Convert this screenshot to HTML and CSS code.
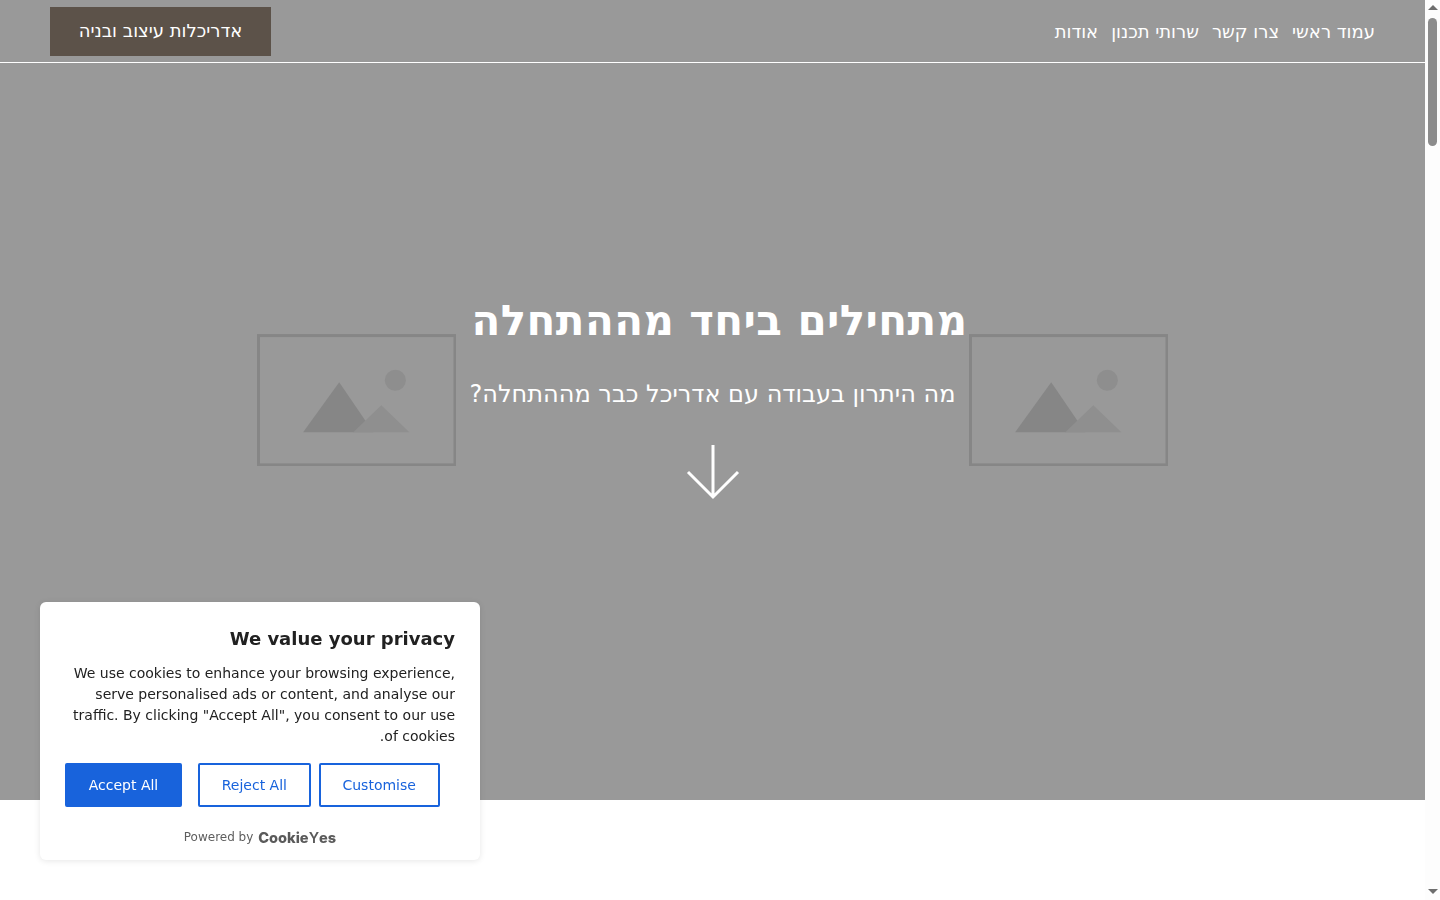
FILE: index.html

```html
<!DOCTYPE html>
<html lang="he">
<head>
  <meta charset="UTF-8" />
  <meta name="viewport" content="width=device-width, initial-scale=1.0"/>
  <title>אדריכלות עיצוב ובניה</title>
  <link rel="stylesheet" href="styles.css">
</head>
<body>
  <div class="page" dir="rtl">
    <section class="hero">
      <header class="topbar">
        <nav class="nav">
          <a href="#">עמוד ראשי</a>
          <a href="#">צרו קשר</a>
          <a href="#">שרותי תכנון</a>
          <a href="#">אודות</a>
        </nav>
        <a class="logo" href="#">אדריכלות עיצוב ובניה</a>
      </header>
      <div class="hero-body">
        <div class="placeholders">
          <svg class="placeholder" viewBox="0 0 199 132" aria-hidden="true">
            <rect x="1.5" y="1.5" width="196" height="129" fill="none" stroke="#868686" stroke-width="3"/>
            <circle cx="138" cy="46" r="10.500" fill="#8e8e8e"/>
            <path d="M46 98 82 48 116 98Z" fill="#868686"/>
            <path d="M96 98 124 71 152 98Z" fill="#8f8f8f"/>
          </svg>
          <svg class="placeholder" viewBox="0 0 199 132" aria-hidden="true">
            <rect x="1.5" y="1.5" width="196" height="129" fill="none" stroke="#868686" stroke-width="3"/>
            <circle cx="138" cy="46" r="10.500" fill="#8e8e8e"/>
            <path d="M46 98 82 48 116 98Z" fill="#868686"/>
            <path d="M96 98 124 71 152 98Z" fill="#8f8f8f"/>
          </svg>
        </div>
        <div class="hero-text">
          <h1>מתחילים ביחד מההתחלה</h1>
          <p>מה היתרון בעבודה עם אדריכל כבר מההתחלה?</p>
          <svg class="arrow" viewBox="0 0 54 56" aria-hidden="true">
            <path d="M27 1V53M2 28 27 53 52 28" fill="none" stroke="#fff" stroke-width="3"/>
          </svg>
        </div>
      </div>
    </section>
  </div>

  <div class="scrollbar" aria-hidden="true">
    <span class="arrow-up"></span>
    <span class="thumb"></span>
    <span class="arrow-down"></span>
  </div>

  <div class="cookie" dir="rtl">
    <h2>We value your privacy</h2>
    <p>We use cookies to enhance your browsing experience, serve personalised ads or content, and analyse our traffic. By clicking "Accept All", you consent to our use of cookies.</p>
    <div class="cookie-buttons" dir="ltr">
      <button class="btn btn-accept">Accept All</button>
      <button class="btn">Reject All</button>
      <button class="btn">Customise</button>
    </div>
    <div class="powered" dir="ltr">Powered by <span class="brand">Cookie<span class="brand-y">Y</span>es</span></div>
  </div>
</body>
</html>
```

FILE: styles.css

```css
* {
  box-sizing: border-box;
  font-family: "DejaVu Sans", sans-serif;
}
html, body {
  height: 100%;
}
body {
  margin: 0;
  display: flex;
  flex-direction: row;
  overflow: hidden;
  background: #fff;
}
.page {
  flex: 1;
  min-width: 0;
}
.hero {
  height: 800px;
  background: #999;
  display: flex;
  flex-direction: column;
  color: #fff;
}
.topbar {
  height: 63px;
  border-bottom: 1px solid #fff;
  display: flex;
  justify-content: space-between;
  align-items: flex-start;
  padding: 7px 50px 0 50px;
}
.nav {
  display: flex;
  gap: 13px;
  height: 48px;
  align-items: center;
}
.nav a {
  color: #fff;
  text-decoration: none;
  font-size: 18px;
}
.logo {
  width: 221px;
  height: 49px;
  padding-bottom: 2px;
  background: #5c5249;
  color: #fff;
  font-size: 18px;
  text-decoration: none;
  display: flex;
  align-items: center;
  justify-content: center;
}
.hero-body {
  flex: 1;
  display: grid;
  align-items: start;
  justify-items: center;
}
.placeholders {
  grid-area: 1 / 1;
  display: flex;
  gap: 512.500px;
  padding-top: 270.500px;
}
.placeholder {
  width: 199.500px;
  height: 132.500px;
  display: block;
}
.hero-text {
  grid-area: 1 / 1;
  display: flex;
  flex-direction: column;
  align-items: center;
  padding-top: 233px;
}
.hero-text h1 {
  margin: 0 0 0 14px;
  font-size: 42px;
  line-height: 50px;
  font-weight: 700;
  letter-spacing: 0.4px;
}
.hero-text p {
  margin: 33px 0 0;
  font-size: 24px;
  line-height: 30px;
}
.arrow {
  width: 54px;
  height: 56px;
  margin-top: 35px;
  display: block;
}
.scrollbar {
  width: 15px;
  flex: none;
  height: 100%;
  background: #fdfdfd;
  display: flex;
  flex-direction: column;
  align-items: center;
  padding: 5px 0 6px;
}
.arrow-up, .arrow-down {
  width: 0;
  height: 0;
  border-left: 5px solid transparent;
  border-right: 5px solid transparent;
}
.arrow-up {
  border-bottom: 5px solid #6e6e6e;
}
.arrow-down {
  border-top: 5px solid #6e6e6e;
  margin-top: auto;
}
.thumb {
  width: 9px;
  height: 128px;
  margin-top: 8px;
  background: #8c8c8c;
  border-radius: 5px;
}
.cookie {
  position: fixed;
  left: 40px;
  top: 602px;
  width: 440px;
  height: 258px;
  background: #fff;
  border-radius: 6px;
  box-shadow: 0 1px 6px rgba(0, 0, 0, 0.1);
  padding: 25px 25px 0;
  color: #212121;
}
.cookie h2 {
  margin: 0;
  font-size: 18px;
  line-height: 23px;
  font-weight: 700;
}
.cookie p {
  margin: 13px 0 0;
  font-size: 14px;
  line-height: 21px;
}
.cookie-buttons {
  display: flex;
  gap: 8px;
  margin-top: 16px;
}
.btn {
  height: 44px;
  padding: 0 21.750px;
  font-size: 14px;
  background: #fff;
  color: #1863dc;
  border: 2px solid #1863dc;
  border-radius: 2px;
}
.btn-accept {
  width: 117px;
  padding: 0;
  background: #1863dc;
  color: #fff;
  margin-right: 8px;
}
.powered {
  margin-top: 20px;
  text-align: center;
  font-size: 12px;
  line-height: 18px;
  color: #5e5e5e;
}
.brand {
  font-family: "Inter", sans-serif;
  font-size: 14.600px;
  font-weight: 800;
  margin-left: 1px;
  color: #5a5a5a;
  position: relative;
  top: 2px;
}
.brand-y {
  font-family: "Inter", sans-serif;
  font-weight: 600;
}
```
